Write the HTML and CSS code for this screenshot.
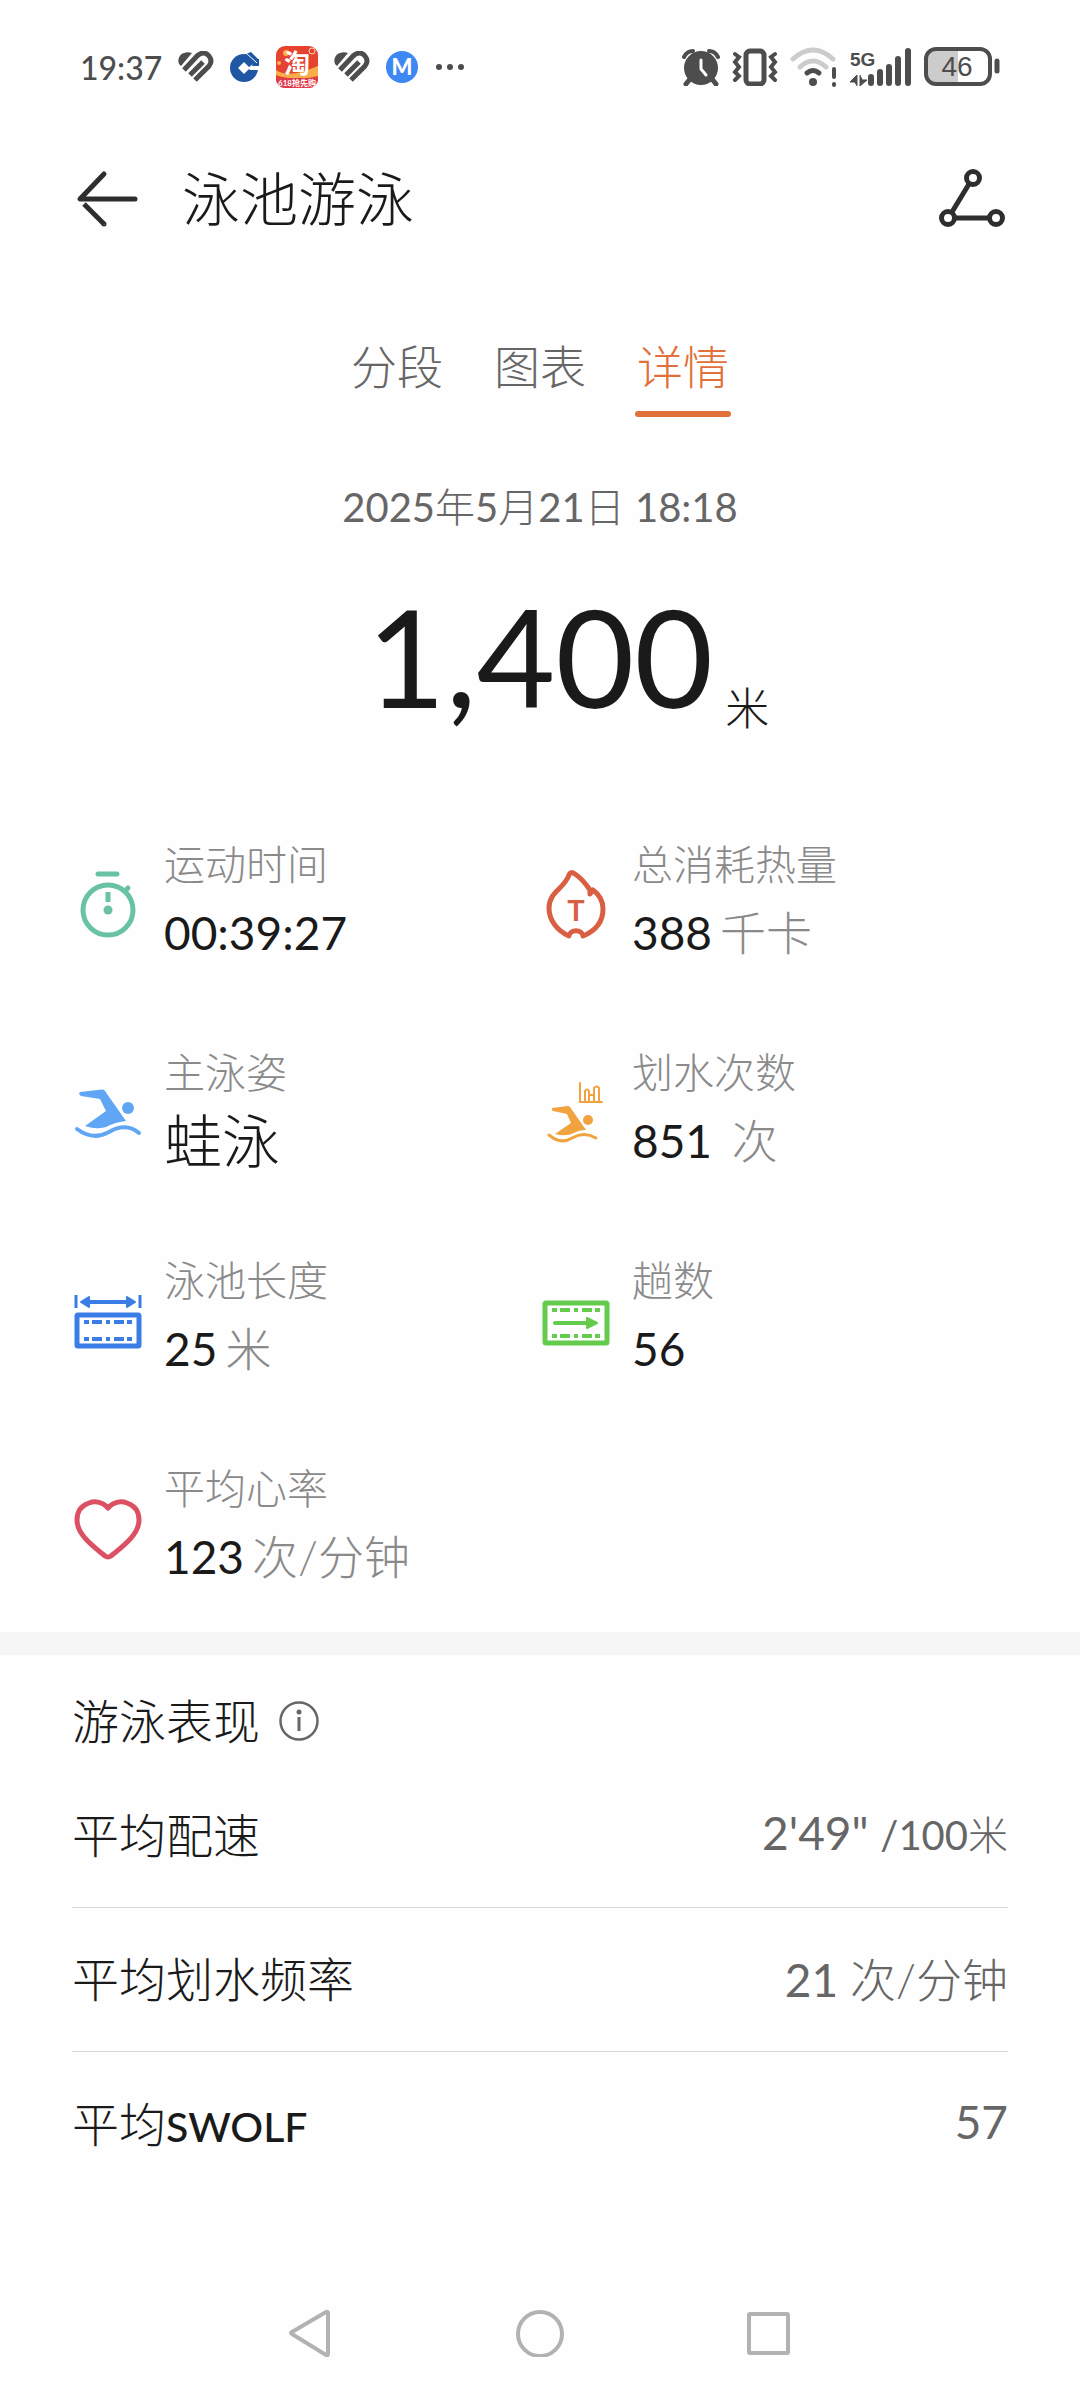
FILE: index.html
```html
<!DOCTYPE html>
<html lang="zh-CN">
<head>
  <meta charset="UTF-8">
  <meta name="viewport" content="width=device-width, initial-scale=1.0">
  <title>泳池游泳</title>
  <link rel="stylesheet" href="styles.css">
</head>
<body>
  <div class="status-bar">
    <div class="status-left">
      <span class="time">19:37</span>
      <svg class="ico-app" width="36" height="32" viewBox="0 0 36 32">
        <path d="M1 13C-2 5 6 -1 14 2L3 15Z" fill="#4d4d4d"/>
        <path d="M6 19L19 5Q26 -1 31 5Q35 10 31 15L17 29M12 24L25 11" fill="none" stroke="#4d4d4d" stroke-width="5"/>
      </svg>
      <svg class="ico-app" width="30" height="32" viewBox="0 0 30 32">
        <circle cx="14" cy="17" r="14" fill="#1f57a5"/>
        <path d="M16 3L21 1L29 9V16H20Z" fill="#1f57a5"/>
        <path d="M14 11L20 17L14 23L8 17Z" fill="#fff"/>
        <path d="M18 17L23 13H30V19H20Z" fill="#fff"/>
        <path d="M24 8H29V15H22Z" fill="#1f57a5"/>
        <path d="M16 2L27 12" stroke="#fff" stroke-width="1"/>
      </svg>
      <svg class="ico-app" width="42" height="42" viewBox="0 0 42 42">
        <rect width="42" height="42" rx="9" fill="#e5432f"/>
        <path d="M0 24Q12 33 42 20V30Q20 36 0 29Z" fill="#f7ae48"/>
        <path d="M0 32H42V33A9 9 0 0 1 33 42H9A9 9 0 0 1 0 33Z" fill="#e03a4b"/>
        <circle cx="10" cy="7" r="3" fill="#f9b14b"/>
        <circle cx="3" cy="17" r="2" fill="#f9b14b"/>
        <circle cx="36" cy="5" r="3" fill="none" stroke="#fbd0b4"/>
        <text class="tao" x="21" y="27" text-anchor="middle">淘</text>
        <text class="tao-sale" x="21" y="40" text-anchor="middle">618抢先购</text>
      </svg>
      <svg class="ico-app" width="36" height="32" viewBox="0 0 36 32">
        <path d="M1 13C-2 5 6 -1 14 2L3 15Z" fill="#4d4d4d"/>
        <path d="M6 19L19 5Q26 -1 31 5Q35 10 31 15L17 29M12 24L25 11" fill="none" stroke="#4d4d4d" stroke-width="5"/>
      </svg>
      <svg class="ico-app" width="32" height="32" viewBox="0 0 32 32">
        <circle cx="16" cy="16" r="16" fill="#3f87f2"/>
        <text class="m-logo" x="16" y="24" text-anchor="middle">M</text>
      </svg>
      <svg class="ico-app" width="32" height="8" viewBox="0 0 32 8">
        <g fill="#4d4d4d"><circle cx="5" cy="4" r="3"/><circle cx="16" cy="4" r="3"/><circle cx="27" cy="4" r="3"/></g>
      </svg>
    </div>
    <div class="status-right">
      <svg width="38" height="38" viewBox="0 0 38 38">
        <circle cx="19" cy="20" r="17" fill="#4d4d4d"/>
        <path d="M2 9Q5 3 11 3M36 9Q33 3 27 3" fill="none" stroke="#4d4d4d" stroke-width="4" stroke-linecap="round"/>
        <path d="M8 31L4 36M30 31L34 36" stroke="#4d4d4d" stroke-width="5" stroke-linecap="round"/>
        <path d="M19 12V21L24 27" fill="none" stroke="#fff" stroke-width="3" stroke-linecap="round"/>
      </svg>
      <svg width="46" height="38" viewBox="0 0 46 38">
        <rect x="14" y="3" width="18" height="33" rx="4" fill="none" stroke="#4d4d4d" stroke-width="5"/>
        <path d="M3 6L7 9L3 14L7 19L3 24L7 28L3 32M43 6L39 9L43 14L39 19L43 24L39 28L43 32" fill="none" stroke="#4d4d4d" stroke-width="4" stroke-linecap="round"/>
      </svg>
      <svg width="48" height="40" viewBox="0 0 48 40">
        <path d="M3 12Q23 -6 43 12" fill="none" stroke="#ccc" stroke-width="5" stroke-linecap="round"/>
        <path d="M10 20Q23 8 36 20" fill="none" stroke="#ccc" stroke-width="5" stroke-linecap="round"/>
        <path d="M17 26Q23 21 29 26" fill="none" stroke="#4d4d4d" stroke-width="5" stroke-linecap="round"/>
        <circle cx="23" cy="35" r="4" fill="#4d4d4d"/>
        <path d="M44 22V30M44 37V38" stroke="#4d4d4d" stroke-width="4" stroke-linecap="round"/>
      </svg>
      <svg width="62" height="40" viewBox="0 0 62 40">
        <text class="net" x="0" y="19">5G</text>
        <path d="M7 39V28L0 35H4M10 28V39L17 33H13" fill="#4d4d4d" stroke="#4d4d4d"/>
        <path d="M21 30V36M30 25V36M39 20V36M48 12V36M58 4V36" stroke="#4d4d4d" stroke-width="6" stroke-linecap="round"/>
      </svg>
      <svg width="76" height="40" viewBox="0 0 76 40">
        <path d="M12 3H34V36H12A9 9 0 0 1 3 27V12A9 9 0 0 1 12 3Z" fill="#ccc"/>
        <rect x="2" y="2" width="64" height="35" rx="10" fill="none" stroke="#4d4d4d" stroke-width="4"/>
        <path d="M73 14V24" stroke="#4d4d4d" stroke-width="5" stroke-linecap="round"/>
        <text class="battery" x="33" y="29" text-anchor="middle">46</text>
      </svg>
    </div>
  </div>

  <header class="header">
    <button class="icon-btn" type="button" aria-label="返回">
      <svg width="72" height="72" viewBox="0 0 72 72" fill="none" stroke="#2e2e2e" stroke-width="5" stroke-linejoin="round">
        <path d="M32 11L8 36H63" stroke-linecap="round"/>
        <path d="M12 41L32 61"/>
        <circle cx="32" cy="61" r="1" stroke-width="3"/>
      </svg>
    </button>
    <h1 class="title">泳池游泳</h1>
    <button class="icon-btn" type="button" aria-label="轨迹分享">
      <svg width="72" height="72" viewBox="0 0 72 72" fill="none" stroke="#2e2e2e" stroke-width="5">
        <circle cx="37" cy="15" r="6.5"/>
        <circle cx="12" cy="55" r="6.5"/>
        <circle cx="60" cy="55" r="6.5"/>
        <path d="M33 21L16 49M19 55H53"/>
      </svg>
    </button>
  </header>

  <nav class="tabs">
    <button class="tab" type="button">分段</button>
    <button class="tab" type="button">图表</button>
    <button class="tab active" type="button">详情</button>
  </nav>

  <main>
    <section class="summary">
      <p class="date">2025<span class="cjk">年</span>5<span class="cjk">月</span>21<span class="cjk">日</span> 18:18</p>
      <p class="distance"><span class="num">1,400</span><span class="distance-unit">米</span></p>
    </section>

    <section class="stats">
      <div class="stat">
        <svg width="72" height="72" viewBox="0 0 72 72" fill="none" stroke="#69c3a3" stroke-width="5" stroke-linecap="round">
          <circle cx="36" cy="41" r="25"/>
          <path d="M26 5H45M53 22L56 19"/>
          <path d="M36 23V33" stroke-linecap="butt"/>
          <circle cx="36" cy="41" r="4.5" fill="#69c3a3" stroke="none"/>
        </svg>
        <div class="stat-text">
          <div class="label">运动时间</div>
          <div class="value">00:39:27</div>
        </div>
      </div>
      <div class="stat">
        <svg width="72" height="72" viewBox="0 0 72 72">
          <path d="M29 67C18 62 9 52 9 39C9 23 24 20 29 6C30 3 32 3 35 5C41 9 46 15 50 21V25L53 21C60 26 63 33 63 40C63 53 55 62 43 67C42 60 30 60 29 67Z" fill="none" stroke="#d95f43" stroke-width="5" stroke-linejoin="round"/>
          <text class="flame-t" x="36" y="52" text-anchor="middle">T</text>
        </svg>
        <div class="stat-text">
          <div class="label">总消耗热量</div>
          <div class="value">388<span class="unit">千卡</span></div>
        </div>
      </div>
      <div class="stat">
        <svg width="72" height="72" viewBox="0 0 72 72" fill="#61a6f5">
          <path d="M8 15L30 12.5Q32 12 33 14L54 44Q45 45 38 48Q28 54 13 49L34 34L28 22L9 19Q6 17 8 15Z"/>
          <circle cx="56" cy="31" r="6"/>
          <path d="M5 52Q21 64 37 55Q54 45 67 56" fill="none" stroke="#61a6f5" stroke-width="4" stroke-linecap="round"/>
        </svg>
        <div class="stat-text">
          <div class="label">主泳姿</div>
          <div class="value stroke-name">蛙泳</div>
        </div>
      </div>
      <div class="stat">
        <svg width="72" height="72" viewBox="0 0 72 72" fill="#f0a33f">
          <path d="M12 31L28 29Q29 29 30 30L46 53Q39 53 34 56Q26 60 15 57L31 46L27 37L13 34Q11 33 12 31Z"/>
          <circle cx="48" cy="43" r="5"/>
          <path d="M9 58Q21 68 32 61Q44 54 56 61" fill="none" stroke="#f0a33f" stroke-width="3" stroke-linecap="round"/>
          <path d="M40 6V25H62M45 25V14Q47 11 49 14V25M49 18H54M54 25V11Q57 8 59 11V25" fill="none" stroke="#f0a33f" stroke-width="2" stroke-linecap="round"/>
        </svg>
        <div class="stat-text">
          <div class="label">划水次数</div>
          <div class="value">851 <span class="unit">次</span></div>
        </div>
      </div>
      <div class="stat">
        <svg width="72" height="72" viewBox="0 0 72 72" fill="none" stroke="#3b7de6" stroke-width="5">
          <rect x="5" y="30" width="62" height="31" rx="1"/>
          <path d="M4 10V23M68 10V23" stroke-width="3"/>
          <path d="M14 17H58" stroke-width="4"/>
          <path d="M9 17L17 12V22ZM63 17L55 12V22Z" fill="#3b7de6" stroke-width="2" stroke-linejoin="round"/>
          <path d="M12 37H60M12 54H60" stroke-width="4" stroke-dasharray="5 3 10 4 4 4 10 3 5"/>
        </svg>
        <div class="stat-text">
          <div class="label">泳池长度</div>
          <div class="value">25<span class="unit">米</span></div>
        </div>
      </div>
      <div class="stat">
        <svg width="72" height="72" viewBox="0 0 72 72" fill="none" stroke="#64cb4c" stroke-width="5">
          <rect x="5" y="18" width="62" height="40" rx="1"/>
          <path d="M12 25H60M12 51H60" stroke-width="4" stroke-dasharray="5 3 10 4 4 4 10 3 5"/>
          <path d="M15 38H48" stroke-width="4" stroke-linecap="round"/>
          <path d="M57 38L47 33V43Z" fill="#64cb4c" stroke-width="2" stroke-linejoin="round"/>
        </svg>
        <div class="stat-text">
          <div class="label">趟数</div>
          <div class="value">56</div>
        </div>
      </div>
      <div class="stat">
        <svg width="72" height="72" viewBox="0 0 72 72">
          <path d="M36 15C30 8 22 8 17 10C8 13 5 20 5 27C5 42 22 54 33 63Q36 65 39 63C50 54 67 42 67 27C67 20 64 13 55 10C50 8 42 8 36 15Z" fill="none" stroke="#dc5064" stroke-width="5" stroke-linejoin="round"/>
        </svg>
        <div class="stat-text">
          <div class="label">平均心率</div>
          <div class="value">123<span class="unit">次/分钟</span></div>
        </div>
      </div>
    </section>

    <section class="performance">
      <h2 class="section-title">
        游泳表现
        <button class="info-btn" type="button" aria-label="说明">
          <svg width="40" height="40" viewBox="0 0 40 40">
            <circle cx="20" cy="20" r="18.5" fill="none" stroke="#666" stroke-width="2.5"/>
            <circle cx="20" cy="11" r="2.5" fill="#666"/>
            <path d="M20 16V30" stroke="#666" stroke-width="3"/>
          </svg>
        </button>
      </h2>
      <dl class="rows">
        <div class="row">
          <dt>平均配速</dt>
          <dd>2'49" <span class="row-unit">/100<span class="cjk">米</span></span></dd>
        </div>
        <div class="row">
          <dt>平均划水频率</dt>
          <dd>21 <span class="cjk">次/分钟</span></dd>
        </div>
        <div class="row">
          <dt>平均<span class="swolf">SWOLF</span></dt>
          <dd>57</dd>
        </div>
      </dl>
    </section>
  </main>

  <nav class="nav-bar">
    <button class="icon-btn" type="button" aria-label="后退">
      <svg width="48" height="48" viewBox="0 0 48 48"><path d="M41 4V45Q41 47 39 46L5 25Q3 24 5 23L39 3Q41 2 41 4Z" fill="none" stroke="#b2b2b2" stroke-width="4"/></svg>
    </button>
    <button class="icon-btn" type="button" aria-label="主页">
      <svg width="48" height="48" viewBox="0 0 48 48"><circle cx="24" cy="25" r="22" fill="none" stroke="#b2b2b2" stroke-width="4"/></svg>
    </button>
    <button class="icon-btn" type="button" aria-label="最近任务">
      <svg width="48" height="48" viewBox="0 0 48 48"><rect x="4" y="5" width="39" height="39" rx="1" fill="none" stroke="#b2b2b2" stroke-width="4"/></svg>
    </button>
  </nav>
</body>
</html>
```
FILE: styles.css
```css
body, h1, h2, p, dl, dd {
    margin: 0;
    font-weight: 300;
}

body {
    display: flex;
    flex-direction: column;
    min-height: 100vh;
    background-color: #fefefe;
    color: #1a1a1a;
    font-family: Lato, "Noto Sans CJK SC", sans-serif;
}

button {
    padding: 0;
    border: none;
    background: none;
    color: inherit;
    font: inherit;
    cursor: pointer;
}
svg {
    display: block;
    flex-shrink: 0;
}
.cjk {
    font-weight: 300;
}

/* status bar */
.status-bar {
    display: flex;
    justify-content: space-between;
    align-items: center;
    height: 134px;
    padding: 0 80px;
    color: #4d4d4d;
}
.status-left, .status-right {
    display: flex;
    align-items: center;
    gap: 16px;
}
.status-right {
    gap: 12px;
}
.time {
    font-size: 32px;
    font-weight: 500;
}
.tao {
    fill: #fff;
    font-size: 26px;
    font-weight: 700;
}
.tao-sale {
    fill: #fff;
    font-size: 8px;
    font-weight: 700;
}
.m-logo {
    fill: #fff;
    font-size: 22px;
    font-weight: 900;
}
.net {
    fill: #4d4d4d;
    font-family: "Liberation Sans", sans-serif;
    font-size: 19px;
    font-weight: 700;
}
.battery {
    fill: #4d4d4d;
    font-family: "Liberation Sans", sans-serif;
    font-size: 28px;
    font-weight: 400;
}

/* header */
.header {
    display: flex;
    align-items: center;
    height: 130px;
    padding: 0 72px;
}
.title {
    flex: 1;
    margin-left: 38px;
    font-size: 58px;
    line-height: 72px;
}

.tabs {
    display: flex;
    justify-content: center;
    gap: 47px;
    margin-top: 71px;
    color: #666;
}
.tab {
    padding: 0 2px 12px;
    border-bottom: 6px solid transparent;
    font-size: 46px;
    line-height: 64px;
}
.tab.active {
    position: relative;
    color: #e2703a;
}
.tab.active::after {
    content: "";
    position: absolute;
    left: 0;
    right: 0;
    bottom: -6px;
    height: 6px;
    border-radius: 3px;
    background-color: #e2703a;
}

.summary {
    padding-top: 60px;
    text-align: center;
}
.date {
    color: #666;
    font-size: 40px;
    font-weight: 400;
    line-height: 60px;
}
.distance {
    display: grid;
    grid-template-columns: 1fr auto 1fr;
    align-items: end;
    column-gap: 12px;
    margin-top: 49px;
}
.num {
    grid-column: 2;
    font-size: 136px;
    font-weight: 400;
    line-height: 140px;
}
.distance-unit {
    font-size: 44px;
    line-height: 36px;
    text-align: left;
}

/* stats */
.stats {
    display: grid;
    grid-template-columns: 1fr 1fr;
    row-gap: 72px;
    padding: 111px 72px 35px;
}
.stat {
    display: flex;
    align-items: center;
    gap: 20px;
}
.label {
    color: #8a8a8a;
    font-size: 41px;
    line-height: 56px;
}
.value {
    font-size: 46px;
    font-weight: 400;
    line-height: 80px;
}
.stroke-name {
    font-size: 58px;
    font-weight: 300;
}
.unit {
    margin-left: 8px;
    color: #8a8a8a;
    font-weight: 300;
}
.flame-t {
    fill: #d95f43;
    font-size: 29px;
    font-weight: 700;
}

/* performance */
.performance {
    padding: 34px 72px 0;
    border-top: 23px solid #f6f6f6;
}
.section-title {
    display: flex;
    align-items: center;
    gap: 19px;
    font-size: 47px;
    line-height: 64px;
}
.rows {
    margin-top: 11px;
}
.row {
    display: flex;
    justify-content: space-between;
    align-items: center;
    box-sizing: border-box;
    height: 144px;
    padding-bottom: 6px;
    border-bottom: 1px solid #d6d6d6;
    font-size: 47px;
}
.row:last-child {
    border-bottom: none;
}
.row dd {
    color: #666;
    font-size: 46px;
    font-weight: 400;
}
.row-unit {
    font-size: 40px;
}
.swolf {
    font-size: 41px;
    font-weight: 500;
}

/* system navigation */
.nav-bar {
    display: flex;
    justify-content: center;
    align-items: center;
    gap: 181px;
    height: 118px;
    margin-top: auto;
}
```
